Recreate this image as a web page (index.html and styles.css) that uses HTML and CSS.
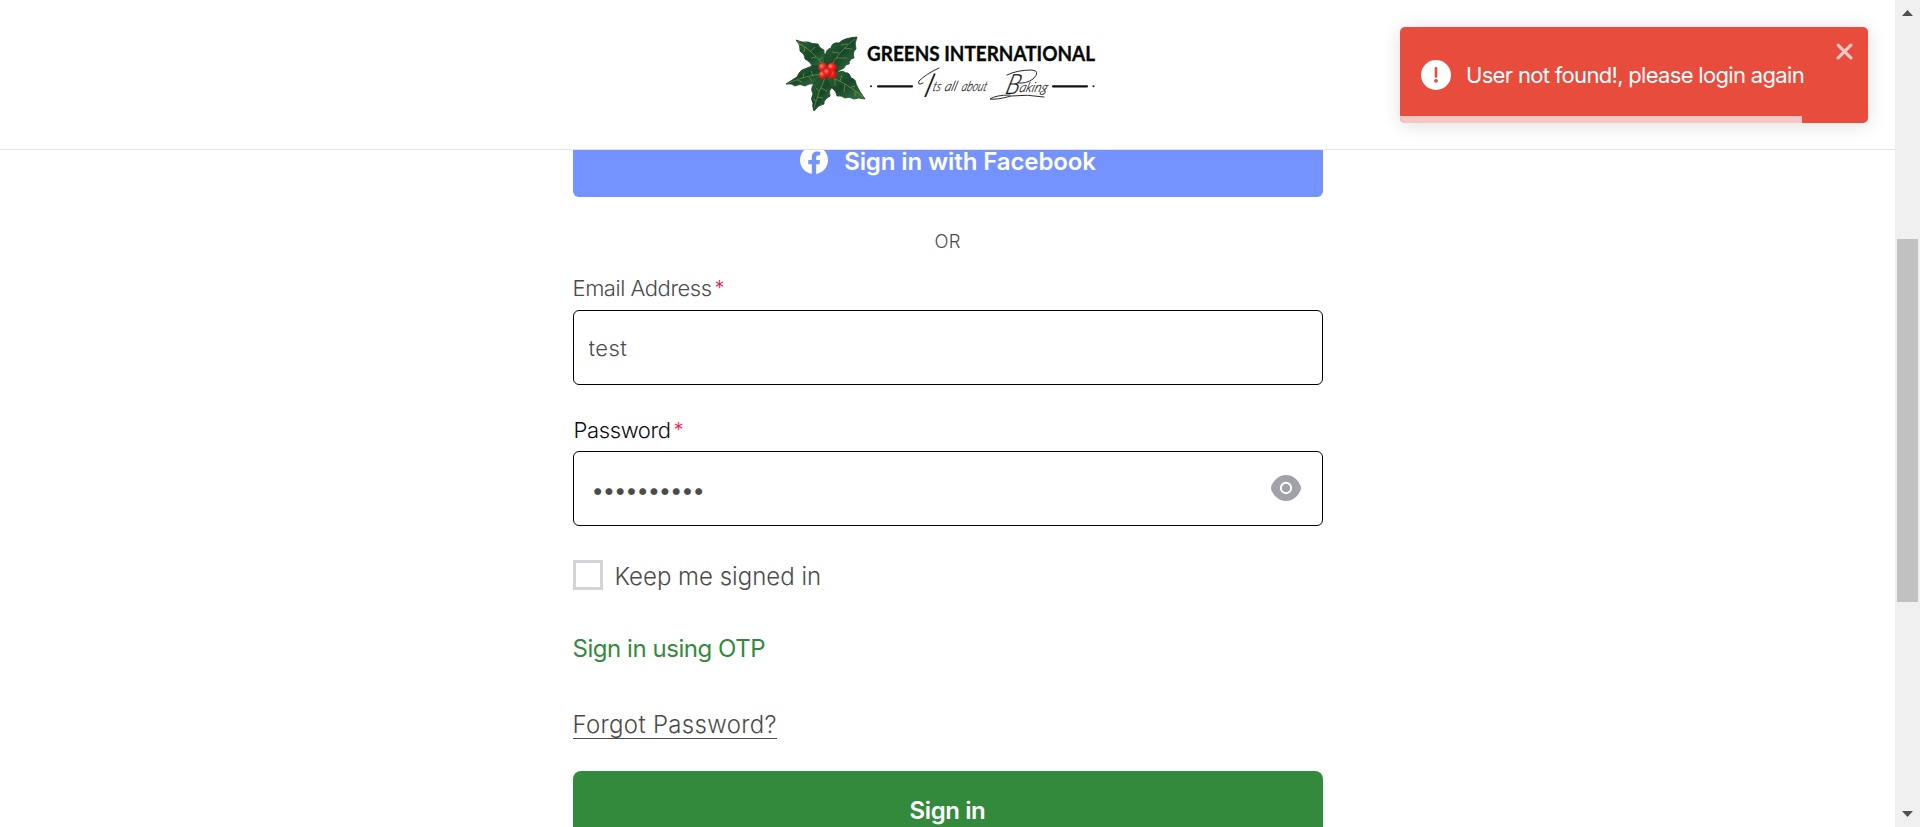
FILE: index.html
```
<!DOCTYPE html>
<html lang="en">
<head>
<meta charset="utf-8">
<title>Greens International - Sign in</title>
<link rel="stylesheet" href="styles.css">
</head>
<body>
<div class="page">
  <div class="view">
    <header class="header">
      <svg class="logo" viewBox="0 0 320 90" role="img" aria-label="Greens International">
        <defs>
          <linearGradient id="leaf" x1="0" y1="0" x2="1" y2="1">
            <stop offset="0" stop-color="#2c6a36"/><stop offset=".5" stop-color="#17472a"/><stop offset="1" stop-color="#3c7a43"/>
          </linearGradient>
          <radialGradient id="berry" cx=".35" cy=".35" r=".7">
            <stop offset="0" stop-color="#ff8a74"/><stop offset=".4" stop-color="#ee2a22"/><stop offset="1" stop-color="#b50d10"/>
          </radialGradient>
        </defs>
        <g fill="url(#leaf)" stroke="#183f20" stroke-width=".8" stroke-linejoin="round">
          <path d="M40 40Q33 39 27 36Q26 32 20 29Q20 24 15 21Q16 15 11 10Q17 13 23 12Q27 14 33 14Q34 18 39 20Q38 23 41 25L43 39Z"/>
          <path d="M41 40Q38 30 41 25Q40 20 46 18Q47 12 54 13Q58 8 72 7Q69 14 71 19Q67 22 69 28Q64 29 64 34Q60 34 59 38Q50 43 44 43Z"/>
          <path d="M40 38Q33 35 27 36Q22 38 17 40Q14 42 12 47Q7 50 1 54Q7 53 10 56Q15 53 20 56Q24 53 29 54Q35 51 40 48Z"/>
          <path d="M37 47Q31 49 29 54Q25 58 28 64Q25 69 28 73Q27 76 29 81Q33 75 39 74Q38 70 45 66Q43 61 47 57Q45 51 44 45Z"/>
          <path d="M42 44Q48 39 54 42Q58 40 61 43Q64 42 66 48Q71 49 71 54Q74 61 80 69Q73 67 69 69Q64 66 60 68Q56 65 52 66Q51 60 45 57Q43 51 41 48Z"/>
        </g>
        <g fill="none" stroke="#8fac4d" stroke-width=".65" opacity=".85">
          <path d="M13 13Q30 22 40 38M20 17L19 22M26 21L30 17M31 27L26 28M34 30L38 27"/>
          <path d="M70 9Q54 21 44 39M63 14L56 15M59 18L67 19M54 23L47 22M51 28L62 28"/>
          <path d="M4 53Q22 45 38 44M12 50L17 52M18 48L19 43M24 47L27 51M28 46L26 41"/>
          <path d="M29 78Q34 60 40 48M31 71L28 69M32 67L38 68M34 61L31 58M36 58L42 61"/>
          <path d="M78 67Q62 53 43 46M70 61L70 66M66 57L70 56M60 54L59 62M55 51L57 45M50 49L50 56"/>
        </g>
        <g fill="url(#berry)">
          <circle cx="38" cy="37.500" r="4.700"/><circle cx="47" cy="37.500" r="4.700"/><circle cx="38" cy="45" r="4.300"/><circle cx="47" cy="44.500" r="4.500"/><circle cx="42.500" cy="42.500" r="4.300"/>
        </g>
        <text class="brand" x="82" y="30.700" textLength="228" lengthAdjust="spacingAndGlyphs">GREENS INTERNATIONAL</text>
        <g fill="#111">
          <circle cx="86" cy="56.300" r="1"/><rect x="92" y="55.300" width="36" height="2.200" rx="1"/>
          <rect x="267" y="55.300" width="36" height="2.200" rx="1"/><circle cx="308.500" cy="56.300" r="1"/>
        </g>
        <g class="tagline" transform="translate(0 61) skewX(-16)">
          <text x="147" y="0" font-size="14" textLength="8" lengthAdjust="spacingAndGlyphs">ts</text>
          <text x="159" y="0" font-size="14" textLength="12" lengthAdjust="spacingAndGlyphs">all</text>
          <text x="176" y="0" font-size="14" textLength="25" lengthAdjust="spacingAndGlyphs">about</text>
          <text x="234" y="1" font-size="14" textLength="28" lengthAdjust="spacingAndGlyphs">aking</text>
          <text x="139" y="6" font-size="33">I</text>
          <text x="220" y="3" font-size="28" textLength="14" lengthAdjust="spacingAndGlyphs">B</text>
        </g>
        <g fill="none" stroke="#111" stroke-width=".9" stroke-linecap="round">
          <path d="M154 38Q141 44 134 51Q132 56 138 53"/>
          <path d="M222 45Q232 40 247 40Q256 41 248 49Q241 54 233 53M225 65Q211 65 205 69Q212 70 226 66Q242 64 259 67"/>
        </g>
      </svg>
    </header>

    <main class="content">
      <form class="form">
        <button class="facebook" type="button">
          <svg class="fb-icon" viewBox="0 0 24 24"><path fill="#fff" d="M24 12.073C24 5.405 18.627 0 12 0S0 5.405 0 12.073c0 6.026 4.388 11.021 10.125 11.927v-8.437H7.078v-3.490h3.047V9.413c0-3.026 1.792-4.697 4.533-4.697 1.312 0 2.686.236 2.686.236v2.971H15.830c-1.491 0-1.956.931-1.956 1.886v2.264h3.328l-.532 3.490h-2.796V24C19.612 23.094 24 18.099 24 12.073z"/></svg>
          <span class="fb-label">Sign in with Facebook</span>
        </button>
        <div class="or"><span>OR</span></div>
        <label class="label" for="email"><span class="email-name">Email Address</span><span class="star">*</span></label>
        <div class="field"><input class="input" id="email" type="text" value="test"></div>
        <label class="label label-dark" for="password"><span class="pass-name">Password</span><span class="star">*</span></label>
        <div class="field">
          <input class="input password" id="password" type="password" value="abcdefghij">
          <svg class="eye" viewBox="0 0 30 26"><path fill="#a1a1aa" d="M15 0C22 0 27 5 29.500 10.500Q30.500 13 29.500 15.500C27 21 22 26 15 26S3 21 .5 15.500Q-.5 13 .5 10.500C3 5 8 0 15 0Z"/><circle cx="15" cy="13" r="5.200" fill="none" stroke="#fff" stroke-width="1.900"/></svg>
        </div>
        <div class="keep"><span class="box"></span><span class="keep-label">Keep me signed in</span></div>
        <a class="otp">Sign in using OTP</a>
        <a class="forgot">Forgot Password?</a>
        <button class="submit" type="button"><span>Sign in</span></button>
      </form>
    </main>
  </div>

  <div class="scrollbar">
    <svg class="arrow" viewBox="0 0 11 6"><path fill="#505050" d="M5.500 0L11 6H0z"/></svg>
    <div class="thumb"></div>
    <svg class="arrow" viewBox="0 0 11 6"><path fill="#505050" d="M0 0H11L5.500 6z"/></svg>
  </div>

  <div class="toast" role="alert">
    <svg class="alert-icon" viewBox="0 0 30 30"><circle cx="15" cy="15" r="15" fill="#fff"/><path d="M15 8.300V16.500" stroke="#e74c3c" stroke-width="2.600" stroke-linecap="round"/><circle cx="15" cy="20.800" r="1.900" fill="#e74c3c"/></svg>
    <span class="toast-text">User not found!, please login again</span>
    <svg class="close" viewBox="0 0 16 16"><path d="M2 2L14 14M14 2L2 14" stroke="#f9c8c3" stroke-width="3" stroke-linecap="round"/></svg>
    <div class="progress"></div>
  </div>
</div>
</body>
</html>
```
FILE: styles.css
```
* { box-sizing: border-box; }
body { margin: 0; font-family: Inter, "Open Sans", sans-serif; color: #4b4b4b; background: #fff; }
.page { position: relative; display: flex; width: 1920px; height: 827px; overflow: hidden; }
.view { flex: 1; display: flex; flex-direction: column; min-width: 0; }
.header { height: 150px; flex: none; border-bottom: 1px solid #e2e2e4; padding: 30px 0 0 785px; }
.logo { display: block; width: 320px; height: 90px; overflow: visible; }
.brand { font: 700 20px Lato, sans-serif; fill: #080808; stroke: #080808; stroke-width: .35px; }
.tagline { font-family: Lato, sans-serif; font-weight: 300; font-style: italic; fill: #111; stroke: #111; stroke-width: .2px; }
.content { flex: 1; min-height: 0; overflow: hidden; display: flex; justify-content: center; align-items: flex-start; }
.form { width: 750px; margin-top: -28px; display: flex; flex-direction: column; align-items: stretch; }
button { border: 0; padding: 0; font-family: inherit; color: #fff; }
.facebook { height: 75px; background: #7593ff; border-radius: 6px; display: flex; align-items: center; justify-content: center; gap: 16px; padding-left: 1px; }
.fb-icon { width: 28px; height: 28px; }
.fb-label { font-size: 24px; font-weight: 600; line-height: 28px; letter-spacing: -.1px; padding-top: 4px; }
.or { height: 24px; line-height: 24px; margin-top: 32px; text-align: center; font-size: 18.500px; font-weight: 350; }
.label { display: flex; gap: 5px; height: 30px; line-height: 30px; margin-top: 20px; margin-bottom: 7px; font-size: 22px; font-weight: 330; }
.label-dark { color: #0b0b12; margin-top: 30px; margin-bottom: 6px; }
.email-name { letter-spacing: -.46px; }
.pass-name { letter-spacing: -.36px; padding-left: 1px; }
.star { color: #f5174f; font-size: 20px; margin-left: -2px; }
.field { height: 75px; border: 1px solid #000; border-radius: 6px; display: flex; align-items: center; padding: 0 21px 0 15px; }
.input { flex: 1; min-width: 0; border: 0; outline: 0; padding: 0; background: none; color: #4b4b4b; font: 330 22px Inter, sans-serif; letter-spacing: .4px; }
.password { font-weight: 400; padding-left: 3px; padding-top: 2px; letter-spacing: -1.150px; }
.eye { width: 30px; height: 26px; margin-bottom: 2px; }
.keep { display: flex; align-items: center; gap: 12px; height: 30px; margin-top: 34px; }
.box { width: 30px; height: 30px; border: 3px solid #d4d4d8; }
.keep-label { font-size: 24px; font-weight: 330; padding-top: 2px; }
.otp { height: 32px; line-height: 34px; margin-top: 42px; font-size: 24px; letter-spacing: -.45px; color: #338a3c; align-self: flex-start; }
.forgot { height: 31px; line-height: 34px; margin-top: 44px; font-size: 24px; font-weight: 330; letter-spacing: .32px; border-bottom: 1px solid #4b4b4b; align-self: flex-start; }
.submit { height: 78px; margin-top: 32px; background: #338a3c; border-radius: 8px; font-size: 24px; font-weight: 600; letter-spacing: -.4px; }
.scrollbar { width: 25px; background: #f0f0f0; padding: 10px 0; display: flex; flex-direction: column; align-items: center; }
.arrow { width: 11px; height: 6px; flex: none; }
.thumb { width: 21px; height: 363px; margin-top: 223px; margin-bottom: auto; background: #c1c1c1; }
.toast { position: absolute; left: 1400px; top: 27px; width: 468px; height: 96px; border-radius: 5px; background: #e74c3c; color: #fff; overflow: hidden; display: flex; align-items: center; padding-left: 21px; gap: 15px; box-shadow: 0 2px 20px rgba(0,0,0,.13); }
.alert-icon { width: 30px; height: 30px; }
.toast-text { font-size: 22px; font-weight: 430; letter-spacing: -.68px; white-space: nowrap; }
.close { position: absolute; right: 15px; top: 16px; width: 17px; height: 17px; }
.progress { position: absolute; left: 0; bottom: 0; height: 7px; width: 402px; background: #f7c6c2; }
```
